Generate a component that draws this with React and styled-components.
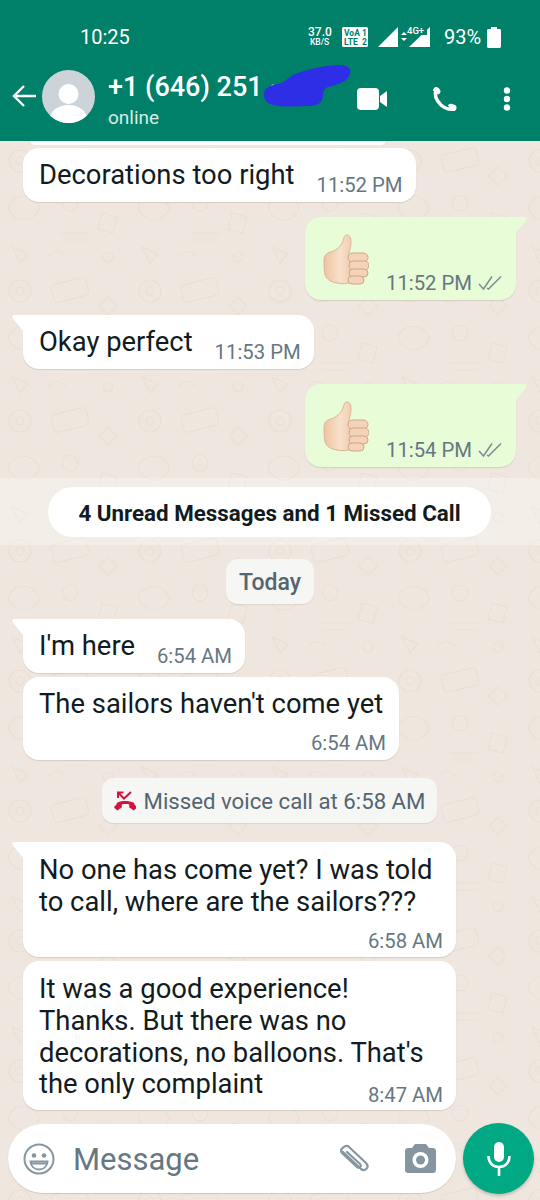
import React from 'react';
import styled, { createGlobalStyle } from 'styled-components';

const GlobalStyle = createGlobalStyle`
  html, body {
    margin: 0;
    padding: 0;
    background: #efe7de;
    font-family: Roboto, "Liberation Sans", sans-serif;
  }
`;

const Page = styled.div`
  position: relative;
  width: 540px;
  height: 1200px;
  display: flex;
  flex-direction: column;
  overflow: hidden;
  background: #efe7df;
`;

const Wallpaper = styled.svg`
  position: absolute;
  left: 0;
  top: 141px;
  width: 540px;
  height: 1059px;
`;

const Header = styled.header`
  position: relative;
  height: 141px;
  flex: none;
  background: #008069;
  color: #fff;
  display: flex;
  flex-direction: column;
`;

const StatusBar = styled.div`
  display: flex;
  align-items: center;
  height: 28px;
  margin-top: 23px;
  padding-left: 80px;
`;

const Clock = styled.span`
  font-size: 20px;
  width: 228px;
`;

const Speed = styled.div`
  width: 23px;
  margin-right: 11px;
  text-align: center;
  font-weight: 500;
  span {
    display: block;
    font-size: 12px;
    line-height: 11px;
    white-space: nowrap;
  }
  small {
    display: block;
    font-size: 8.5px;
    line-height: 9px;
  }
`;

const Battery = styled.span`
  font-size: 20px;
  margin: 0 7px 0 13px;
  width: 36px;
`;

const TitleBar = styled.div`
  display: flex;
  align-items: center;
  height: 90px;
  padding-left: 12px;
`;

const Avatar = styled.svg`
  width: 53px;
  height: 53px;
  margin: 0 13px 0 6px;
  flex: none;
`;

const Contact = styled.div`
  width: 249px;
  margin-top: 7px;
`;

const ContactName = styled.div`
  font-size: 27px;
  line-height: 34px;
  font-weight: 500;
  white-space: nowrap;
`;

const ContactState = styled.div`
  font-size: 19px;
  line-height: 25px;
  margin-top: 1px;
  color: #d5ece6;
`;

const Scribble = styled.svg`
  position: absolute;
  left: 262px;
  top: 64px;
  width: 90px;
  height: 44px;
`;

const HeaderIcon = styled.svg`
  flex: none;
  margin-left: ${p => p.$left || 0}px;
  margin-top: 6px;
`;

const Chat = styled.main`
  position: relative;
  flex: 1;
  min-height: 0;
  display: flex;
  flex-direction: column;
  overflow: hidden;
`;

const PartialBubble = styled.div`
  flex: none;
  width: 354px;
  height: 4px;
  margin-left: 31px;
  background: #fff;
  border-radius: 0 0 14px 14px;
`;

const Bubble = styled.div`
  position: relative;
  flex: none;
  box-sizing: border-box;
  align-self: ${p => (p.$mine ? 'flex-end' : 'flex-start')};
  width: ${p => (p.$width ? `${p.$width}px` : 'auto')};
  height: ${p => (p.$height ? `${p.$height}px` : 'auto')};
  margin: ${p => p.$top}px 24px 0 23px;
  padding: ${p => p.$pad || 11}px 13px ${p => 22 - (p.$pad || 11)}px 16px;
  background: ${p => (p.$mine ? '#e8fcd7' : '#fff')};
  border-radius: 16px;
  border-top-left-radius: ${p => (p.$tail && !p.$mine ? 0 : 16)}px;
  border-top-right-radius: ${p => (p.$tail && p.$mine ? 0 : 16)}px;
  box-shadow: 0 1px 1px rgba(90, 80, 60, 0.16);
  color: #111b21;
  font-size: 27.4px;
  line-height: ${p => (p.$tight ? '31.75px' : '32px')};

  &::before {
    content: '';
    display: ${p => (p.$tail ? 'block' : 'none')};
    position: absolute;
    top: 0;
    width: 12px;
    height: 17px;
    background: inherit;
    ${p => (p.$mine
      ? 'right: -11px; clip-path: polygon(0 0, 82% 0, 100% 8%, 92% 20%, 0 100%);'
      : 'left: -11px; clip-path: polygon(100% 0, 18% 0, 0 8%, 8% 20%, 100% 100%);')}
  }
`;

const Line = styled.div`
  white-space: nowrap;
`;

const Footer = styled.div`
  display: flex;
  justify-content: ${p => (p.$end ? 'flex-end' : 'space-between')};
  align-items: flex-end;
  gap: 22px;
  height: ${p => (p.$end ? '18px' : 'auto')};
  margin-top: ${p => (p.$end ? '11px' : 0)};
`;

const ThumbRow = styled.div`
  display: flex;
  align-items: flex-end;
  padding-top: 6px;
`;

const Meta = styled.span`
  display: flex;
  align-items: center;
  gap: 6px;
  margin-bottom: -6px;
  font-size: 20.3px;
  line-height: 24px;
  color: #667781;
  white-space: nowrap;
`;

const Thumb = styled.svg`
  display: block;
  flex: none;
  margin: 0 17px 3px 2px;
`;

const UnreadBand = styled.div`
  flex: none;
  box-sizing: border-box;
  margin-top: 11px;
  height: 67px;
  padding-top: 1px;
  display: flex;
  align-items: center;
  justify-content: center;
  background: rgba(255, 255, 255, 0.3);
`;

const UnreadPill = styled.div`
  box-sizing: border-box;
  width: 443px;
  height: 50px;
  padding-top: 1px;
  margin-left: -1px;
  display: flex;
  align-items: center;
  justify-content: center;
  border-radius: 25px;
  background: #fff;
  color: #111b21;
  font-size: 22.35px;
  font-weight: 700;
`;

const Notice = styled.div`
  flex: none;
  align-self: center;
  display: flex;
  align-items: center;
  gap: 8px;
  height: 45px;
  padding: 1px ${p => p.$pad}px 0;
  margin-top: ${p => p.$top}px;
  margin-left: ${p => p.$shift || 0}px;
  box-sizing: border-box;
  border-radius: 12px;
  background: #f6f6f4;
  box-shadow: 0 1px 1px rgba(90, 80, 60, 0.12);
  color: #54656f;
  font-size: ${p => p.$size || 22.2}px;
  font-weight: ${p => p.$weight || 400};
  white-space: nowrap;
`;

const Composer = styled.footer`
  position: absolute;
  left: 8px;
  right: 6px;
  bottom: 6px;
  display: flex;
  align-items: center;
  justify-content: space-between;
`;

const InputBox = styled.div`
  width: 448px;
  height: 69px;
  display: flex;
  align-items: center;
  box-sizing: border-box;
  padding-left: 15px;
  border-radius: 35px;
  background: #fff;
  box-shadow: 0 1px 1px rgba(90, 80, 60, 0.2);
`;

const Placeholder = styled.span`
  width: 265px;
  margin: 1px 0 0 18px;
  font-size: 31px;
  color: #667781;
`;

const Attach = styled.svg`
  flex: none;
  margin-left: ${p => p.$left || 0}px;
`;

const MicButton = styled.div`
  width: 71px;
  height: 71px;
  display: flex;
  align-items: center;
  justify-content: center;
  border-radius: 50%;
  background: #00a884;
  box-shadow: 0 2px 3px rgba(60, 60, 40, 0.25);
`;

const Ticks = () => (
  <svg width="24" height="16" viewBox="0 0 24 16" fill="none" stroke="#7b8c93" strokeWidth="1.5">
    <path d="M1 9l4.500 5L14 1.500" />
    <path d="M9 13l1.500 1L23 1.500" />
  </svg>
);

const ThumbsUp = () => (
  <Thumb width="46" height="52" viewBox="0 0 46 52">
    <defs>
      <linearGradient id="skin" x1="0" y1="0" x2="1" y2="0">
        <stop offset="0" stopColor="#eec4a2" />
        <stop offset="0.6" stopColor="#f8e0ca" />
        <stop offset="1" stopColor="#f0cfb2" />
      </linearGradient>
    </defs>
    <path d="M1 26c0-4 2-7 7-8 6-2 10-6 12-11 1-3 1-6 4-6s4 3 4 7c0 4-1 7-2 11l2 29c-4 2-9 2-14 1-6-1-10-3-12-8-1-5-1-10-1-15z" fill="url(#skin)" stroke="#dfb595" strokeWidth="1" />
    <rect x="25" y="19" width="20" height="9" rx="4.500" fill="#f3d4ba" stroke="#d2a583" />
    <rect x="26" y="27" width="20" height="9" rx="4.500" fill="#f3d4ba" stroke="#d2a583" />
    <rect x="26" y="35" width="19" height="8" rx="4" fill="#f3d4ba" stroke="#d2a583" />
    <rect x="25" y="42" width="16" height="8" rx="4" fill="#f3d4ba" stroke="#d2a583" />
  </Thumb>
);

const MineThumb = ({ top, time }) => (
  <Bubble $mine $tail $top={top} $width={211} $height={83}>
    <ThumbRow>
      <ThumbsUp />
      <Meta>{time} <Ticks /></Meta>
    </ThumbRow>
  </Bubble>
);

const Doodles = () => (
  <Wallpaper aria-hidden="true">
    <defs>
      <pattern id="doodle" width="130" height="130" patternUnits="userSpaceOnUse">
        <g fill="none" stroke="#e9e0d5" strokeWidth="1.200">
          <circle cx="20" cy="20" r="11" />
          <circle cx="20" cy="20" r="4" />
          <rect x="52" y="10" width="36" height="18" rx="4" transform="rotate(-14 70 19)" />
          <path d="M108 26l9 9-9 9-9-9z" />
          <path d="M10 62c7-9 20-9 27 0s-7 17-13 17-20-8-14-17z" />
          <circle cx="70" cy="62" r="8" />
          <path d="M60 92h30M63 99h24" />
          <path d="M102 72l15 4-4 16-15-4z" />
          <path d="M12 106l16 7-8 9z" />
          <path d="M48 116c5-7 13-7 18 0" />
          <circle cx="108" cy="116" r="5" />
        </g>
      </pattern>
    </defs>
    <rect width="540" height="1059" fill="url(#doodle)" />
  </Wallpaper>
);

const App = () => (
  <Page>
    <GlobalStyle />
    <Doodles />
    <Header>
      <StatusBar>
        <Clock>10:25</Clock>
        <Speed><span>37.0</span><small>KB/S</small></Speed>
        <svg width="26" height="20" viewBox="0 0 26 20" style={{ marginRight: 9 }}>
          <rect width="26" height="20" rx="1.500" fill="#fff" />
          <text x="2" y="9" fontSize="8.500" fontWeight="700" fill="#008069" fontFamily="Roboto">VoA</text>
          <text x="20" y="9" fontSize="8.500" fontWeight="700" fill="#008069" fontFamily="Roboto">1</text>
          <text x="2" y="18" fontSize="8.500" fontWeight="700" fill="#008069" fontFamily="Roboto">LTE</text>
          <text x="20" y="18" fontSize="8.500" fontWeight="700" fill="#008069" fontFamily="Roboto">2</text>
        </svg>
        <svg width="54" height="24" viewBox="0 0 54 24">
          <path d="M1 22L21 2v20z" fill="#fff" />
          <path d="M24 10l3-3 3 3zM24 13l3 3 3-3z" fill="#fff" />
          <path d="M32 22L53 2v20z" fill="#fff" />
          <rect x="32" y="0" width="18" height="10" fill="#008069" />
          <text x="30" y="9" fontSize="9.500" fontWeight="500" fill="#fff" fontFamily="Roboto">4G+</text>
        </svg>
        <Battery>93%</Battery>
        <svg width="14" height="21" viewBox="0 0 14 21">
          <path d="M4 0h6v2h2.500c.8 0 1.500.7 1.500 1.500V19.500c0 .8-.7 1.500-1.500 1.500h-11C.7 21 0 20.300 0 19.500V3.500C0 2.700.7 2 1.500 2H4z" fill="#fff" />
        </svg>
      </StatusBar>
      <TitleBar>
        <svg width="24" height="24" viewBox="0 0 24 24" fill="none" stroke="#fff" strokeWidth="2.400">
          <path d="M24 12H2M12 2L2 12l10 10" />
        </svg>
        <Avatar viewBox="0 0 53 53">
          <circle cx="26.500" cy="26.500" r="26.500" fill="#ccd3d9" />
          <circle cx="26.500" cy="24" r="10" fill="#fff" />
          <path d="M8.500 46c2-7 9-11 18-11s16 4 18 11a26.500 26.500 0 0 1-36 0z" fill="#fff" />
        </Avatar>
        <Contact>
          <ContactName>+1 (646) 251 ····</ContactName>
          <ContactState>online</ContactState>
        </Contact>
        <HeaderIcon $left={0} width="30" height="22" viewBox="0 0 30 22">
          <rect width="22" height="22" rx="4" fill="#fff" />
          <path d="M23 8l7-5v16l-7-5z" fill="#fff" />
        </HeaderIcon>
        <HeaderIcon $left={44} width="26" height="27" viewBox="0 0 26 27">
          <path d="M5 3.500C3 9 6 15 10 19c3.500 3 8 5 13 4" fill="none" stroke="#fff" strokeWidth="3.400" strokeLinecap="round" />
          <path d="M2 4.500C2 3 3.500 1 5 1c2 0 4 2 4.500 4 .3 1.500-1 3-2.500 3.500zM17 19.500c.7-1.500 2-2.200 3.500-1.700l3.500 1.200c1.300.5 1.800 2 1.500 3.500-.5 1.700-2 3-4 2.500z" fill="#fff" />
        </HeaderIcon>
        <HeaderIcon $left={46} width="8" height="24" viewBox="0 0 8 24">
          <circle cx="4" cy="3.500" r="3.200" fill="#fff" />
          <circle cx="4" cy="12" r="3.200" fill="#fff" />
          <circle cx="4" cy="20.500" r="3.200" fill="#fff" />
        </HeaderIcon>
      </TitleBar>
      <Scribble viewBox="0 0 90 44">
        <path d="M2 30c0-6 6-9 14-10 8-1 10-8 20-11 12-4 28-8 42-8 8 0 12 4 10 9-2 7-12 11-22 13-6 2-4 8-6 13-2 5-8 6-18 6-12 1-26 1-34-2-4-2-6-5-6-10z" fill="#2e2ee6" />
      </Scribble>
    </Header>
    <Chat>
      <PartialBubble />
      <Bubble $top={3}>
        <Footer><span>Decorations too right</span><Meta>11:52 PM</Meta></Footer>
      </Bubble>
      <MineThumb top={15} time="11:52 PM" />
      <Bubble $tail $top={15}>
        <Footer><span>Okay perfect</span><Meta>11:53 PM</Meta></Footer>
      </Bubble>
      <MineThumb top={15} time="11:54 PM" />
      <UnreadBand>
        <UnreadPill>4 Unread Messages and 1 Missed Call</UnreadPill>
      </UnreadBand>
      <Notice $top={14} $pad={13} $weight={500} $size={23}>Today</Notice>
      <Bubble $tail $top={15}>
        <Footer><span>I'm here</span><Meta>6:54 AM</Meta></Footer>
      </Bubble>
      <Bubble $top={4} $width={376}>
        <Line>The sailors haven't come yet</Line>
        <Footer $end><Meta>6:54 AM</Meta></Footer>
      </Bubble>
      <Notice $top={18} $pad={12} $shift={-1}>
        <svg width="22" height="20" viewBox="0 0 22 20">
          <path d="M11 10C8.400 10 6 10.500 3.700 11.400c-.8.400-1 1-1.200 2L.5 15.500c-.4.400-.4 1 0 1.400l2.200 2.200c.4.400 1 .4 1.400 0 1-1 2-1.600 3-2.100.5-.2.700-.6.700-1.200v-2.300c2.200-.6 5.200-.6 7.400 0v2.300c0 .6.200 1 .7 1.200 1 .5 2 1.100 3 2.100.4.400 1 .4 1.400 0l2.200-2.200c.4-.4.400-1 0-1.400l-2-2.100c-.2-1-.4-1.600-1.200-2C16 10.500 13.600 10 11 10z" fill="#d3143f" />
          <path d="M4 7V1.500h5.500M4.500 2L10 7.500 17 1" fill="none" stroke="#d3143f" strokeWidth="2" />
        </svg>
        Missed voice call at 6:58 AM
      </Notice>
      <Bubble $tail $top={19} $width={433} $pad={12}>
        <Line>No one has come yet? I was told</Line>
        <Line>to call, where are the sailors???</Line>
        <Footer $end><Meta>6:58 AM</Meta></Footer>
      </Bubble>
      <Bubble $top={4} $width={433} $tight $pad={13}>
        <Line>It was a good experience!</Line>
        <Line>Thanks. But there was no</Line>
        <Line>decorations, no balloons. That's</Line>
        <Footer><span>the only complaint</span><Meta>8:47 AM</Meta></Footer>
      </Bubble>
    </Chat>
    <Composer>
      <InputBox>
        <svg width="32" height="32" viewBox="0 0 32 32" fill="none" stroke="#8696a0" strokeWidth="2">
          <circle cx="16" cy="16" r="14.500" />
          <circle cx="11" cy="12.500" r="2.300" fill="#8696a0" stroke="none" />
          <circle cx="21" cy="12.500" r="2.300" fill="#8696a0" stroke="none" />
          <path d="M7.500 18.500h17c-.5 5-4 8-8.500 8s-8-3-8.500-8z" />
          <path d="M8 20.500h16" />
        </svg>
        <Placeholder>Message</Placeholder>
        <Attach width="32" height="30" viewBox="0 0 32 30" fill="none" stroke="#8696a0" strokeWidth="2.200" strokeLinecap="round">
          <path d="M5 8l18 17c4 3 9-2 5-6L11 3C8 0 1 5 4 9l15 14c2 2 5-1 3-3L9 8" />
        </Attach>
        <Attach $left={35} width="31" height="29" viewBox="0 0 31 29">
          <path d="M10 0h11l3 4h4c1.700 0 3 1.300 3 3v19c0 1.700-1.300 3-3 3H3c-1.700 0-3-1.300-3-3V7c0-1.700 1.300-3 3-3h4z" fill="#8696a0" />
          <circle cx="15.500" cy="16" r="8" fill="#fff" />
          <circle cx="15.500" cy="16" r="4.500" fill="#8696a0" />
        </Attach>
      </InputBox>
      <MicButton>
        <svg width="24" height="34" viewBox="0 0 24 34" fill="none" stroke="#fff" strokeWidth="2.600">
          <rect x="7" y="0" width="10" height="20" rx="5" fill="#fff" stroke="none" />
          <path d="M1.500 14c0 7 4.500 11 10.500 11s10.500-4 10.500-11M12 25v9" />
        </svg>
      </MicButton>
    </Composer>
  </Page>
);

export default App;
